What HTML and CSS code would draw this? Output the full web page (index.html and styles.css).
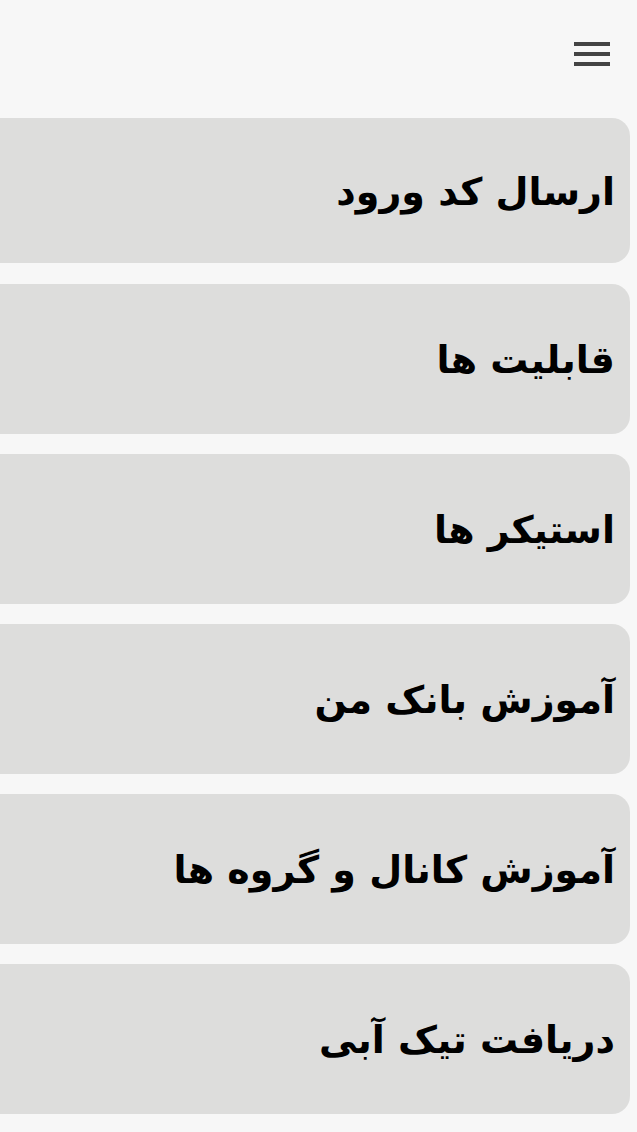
FILE: index.html
```html
<!DOCTYPE html>
<html lang="fa" dir="rtl">
<head>
<meta charset="utf-8">
<title>منو</title>
<link rel="stylesheet" href="styles.css">
</head>
<body>
<header class="top-bar">
  <button class="menu-btn" aria-label="menu">
    <span class="menu-line"></span>
    <span class="menu-line"></span>
    <span class="menu-line"></span>
  </button>
</header>
<main class="list">
  <a class="item item-first">ارسال کد ورود</a>
  <a class="item">قابلیت ها</a>
  <a class="item">استیکر ها</a>
  <a class="item">آموزش بانک من</a>
  <a class="item">آموزش کانال و گروه ها</a>
  <a class="item">دریافت تیک آبی</a>
</main>
</body>
</html>
```
FILE: styles.css
```css
html, body {
  margin: 0;
  padding: 0;
  background: #f7f7f7;
}
body {
  font-family: "DejaVu Sans", sans-serif;
  width: 637px;
  overflow: hidden;
}
.top-bar {
  height: 118px;
  display: flex;
  justify-content: flex-start;
  align-items: flex-start;
  padding-right: 27px;
  box-sizing: border-box;
}
.menu-btn {
  margin-top: 42px;
  width: 36px;
  padding: 0;
  border: 0;
  background: none;
  display: flex;
  flex-direction: column;
  gap: 6px;
}
.menu-line {
  display: block;
  width: 36px;
  height: 4px;
  background: #444444;
}
.list {
  display: flex;
  flex-direction: column;
  gap: 20px;
  width: 630px;
  margin-right: 7px;
}
.item {
  display: flex;
  align-items: center;
  height: 150px;
  box-sizing: border-box;
  padding-right: 15px;
  padding-top: 2px;
  background: #dddddc;
  border-radius: 0 18px 18px 0;
  color: #000;
  font-weight: bold;
  font-size: 38px;
  text-decoration: none;
  white-space: nowrap;
}
.item-first {
  height: 145px;
  margin-bottom: 1px;
}
```
